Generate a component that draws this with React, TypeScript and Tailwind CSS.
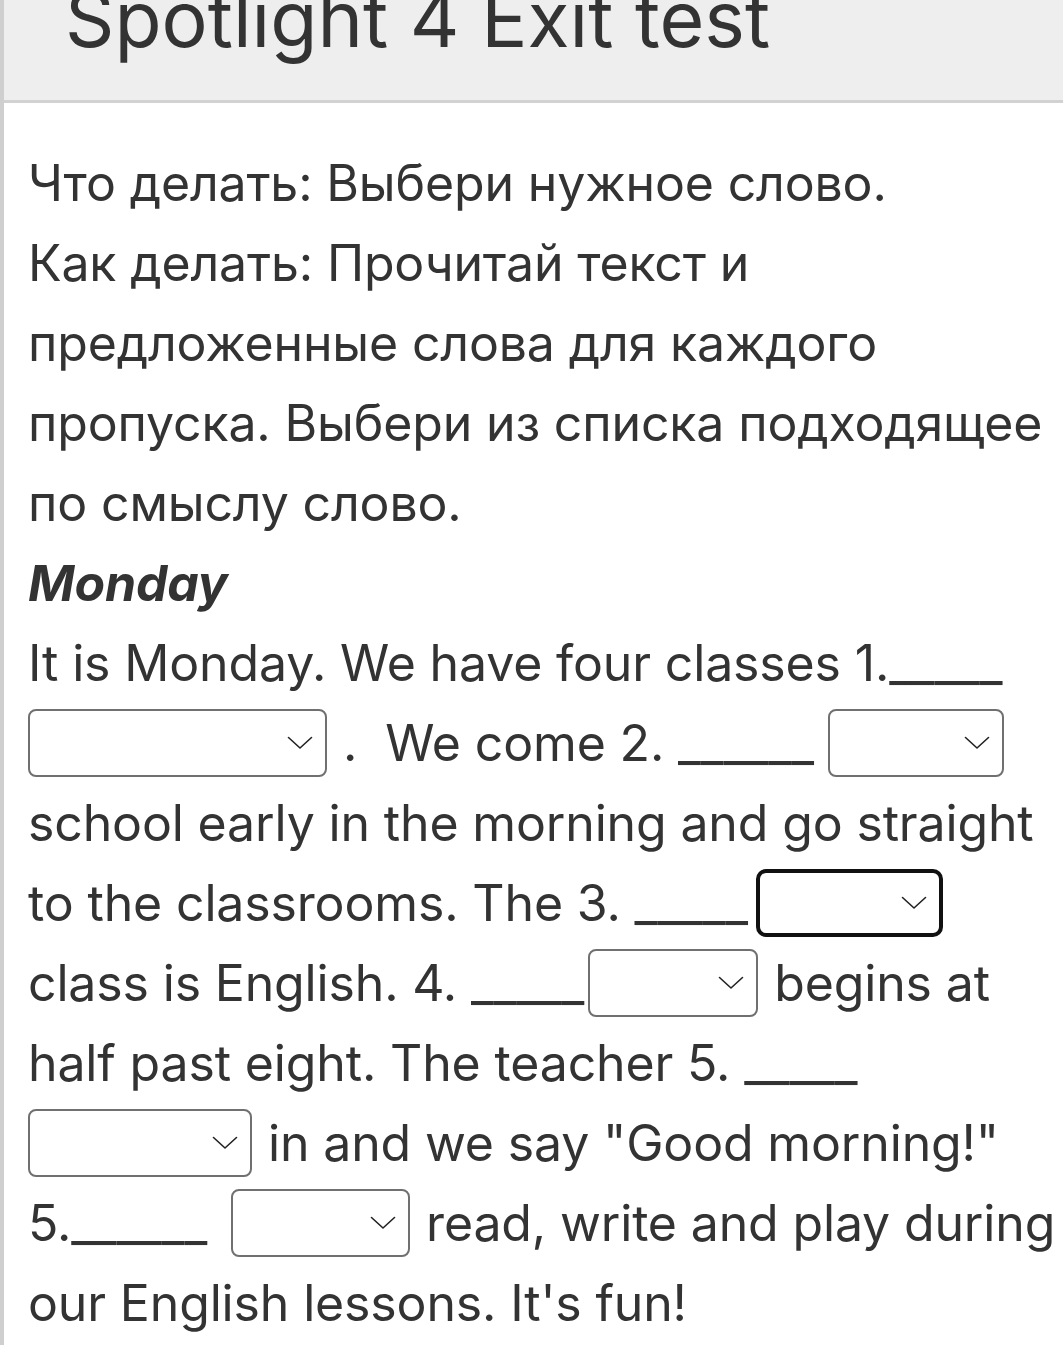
import React from "react";

const font = { fontFamily: "Inter, 'Noto Sans', sans-serif" };

function Sel({ w, focused }: { w: string; focused?: boolean }) {
  return (
    <span
      className={
        "inline-flex h-[68px] shrink-0 items-center justify-end bg-white pr-[12px] " +
        w +
        (focused
          ? " rounded-[10px] border-[4px] border-[#111]"
          : " rounded-[8px] border-[2px] border-[#707070]")
      }
    >
      <svg width="26" height="14" viewBox="0 0 26 14" fill="none">
        <path d="M1.5 1.5 L13 12 L24.5 1.5" stroke="#222" strokeWidth="1.6" strokeLinecap="round" strokeLinejoin="round" />
      </svg>
    </span>
  );
}

function Line({ children }: { children: React.ReactNode }) {
  return (
    <div className="flex h-[80px] items-center whitespace-pre text-[50px] tracking-[-0.15px] text-[#333]">{children}</div>
  );
}

export default function App() {
  return (
    <div className="min-h-screen overflow-hidden border-l-4 border-[#cfcfcf] bg-white" style={font}>
      <header className="h-[103px] overflow-hidden border-b-[3px] border-[#d2d2d2] bg-[#eeeeee]">
        <h1 className="mt-[-19px] ml-[61px] whitespace-nowrap text-[77px] leading-[77px] text-[#333]">
          Spotlight 4 Exit test
        </h1>
      </header>
      <main className="pl-[24px] pt-[40px]">
        <Line>Что делать: Выбери нужное слово.</Line>
        <Line>Как делать: Прочитай текст и</Line>
        <Line>предложенные слова для каждого</Line>
        <Line>пропуска. Выбери из списка подходящее</Line>
        <Line>по смыслу слово.</Line>
        <Line>
          <span className="font-bold italic">Monday</span>
        </Line>
        <Line>It is Monday. We have four classes 1._____</Line>
        <Line>
          <Sel w="w-[299px]" />
          <span className="ml-[16px]">.</span>
          <span className="ml-[28px]">We come 2. ______</span>
          <Sel w="ml-[14px] w-[176px]" />
        </Line>
        <Line>school early in the morning and go straight</Line>
        <Line>
          <span>to the classrooms. The 3. _____</span>
          <Sel w="ml-[8px] w-[187px]" focused />
        </Line>
        <Line>
          <span>class is English. 4. _____</span>
          <Sel w="ml-[4px] w-[170px]" />
          <span className="ml-[16px]">begins at</span>
        </Line>
        <Line>half past eight. The teacher 5. _____</Line>
        <Line>
          <Sel w="w-[224px]" />
          <span className="ml-[16px]">in and we say "Good morning!"</span>
        </Line>
        <Line>
          <span>5.______</span>
          <Sel w="ml-[24px] w-[179px]" />
          <span className="ml-[16px]">read, write and play during</span>
        </Line>
        <Line>our English lessons. It's fun!</Line>
      </main>
    </div>
  );
}
